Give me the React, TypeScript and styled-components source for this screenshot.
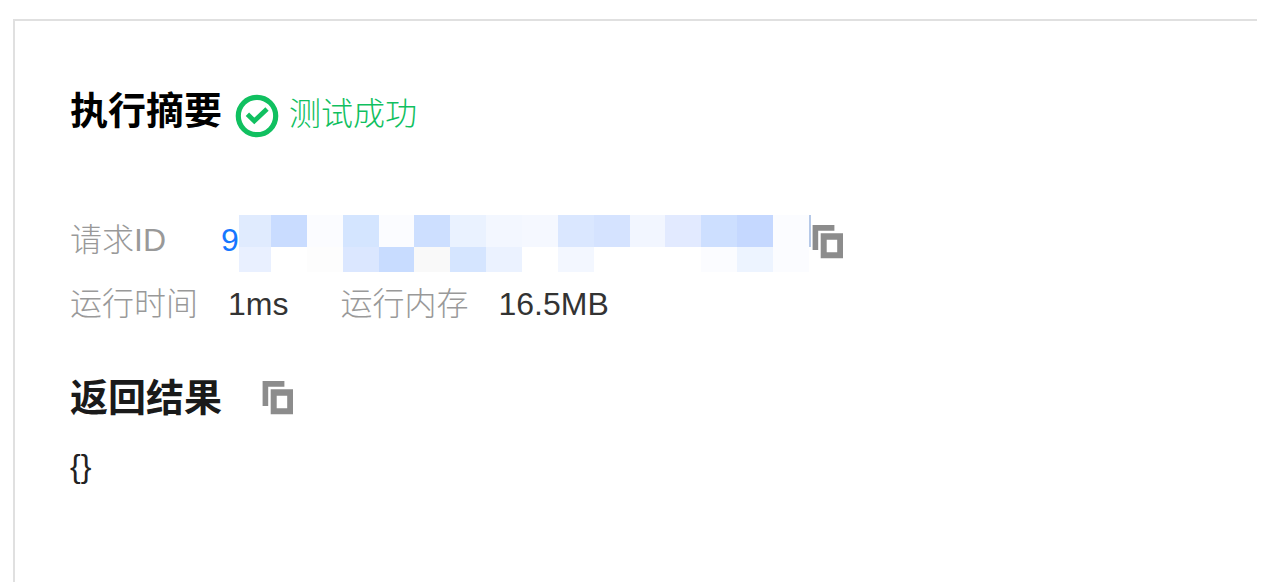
import React from "react";
import styled, { createGlobalStyle } from "styled-components";

const GlobalStyle = createGlobalStyle`
  *, *::before, *::after { box-sizing: border-box; }
  body {
    margin: 0;
    background: #fff;
    color: #222;
    font-family: "Liberation Sans", "Noto Sans CJK SC", sans-serif;
    font-size: 32px;
    line-height: 48px;
  }
`;

const Page = styled.main`
  display: flex;
  min-height: 100vh;
  padding: 19px 8px 0 13px;
`;

const Panel = styled.section`
  flex: 1;
  min-width: 0;
  padding: 63px 24px 40px 55px;
  border: solid #e0e0e0;
  border-width: 2px 0 0 2px;
`;

const Heading = styled.h2<{ $color: string }>`
  margin: 0;
  color: ${(p) => p.$color};
  font-size: 38px;
  line-height: 48px;
  font-weight: 700;
`;

const SummaryHeader = styled.header`
  display: flex;
  align-items: center;
  margin-bottom: 70px;
`;

const Status = styled.span`
  display: flex;
  align-items: center;
  gap: 10px;
  margin-left: 13px;
  padding-top: 6px;
  color: #10c060;
  font-weight: 300;

  svg {
    margin-top: 4px;
  }
`;

const Details = styled.dl`
  margin: 0;
`;

const DetailRow = styled.div`
  display: flex;
  align-items: center;
  gap: 52px;
  height: 64px;
`;

const Detail = styled.div<{ $gap: number }>`
  display: flex;
  align-items: center;
  gap: ${(p) => p.$gap}px;
`;

const Label = styled.dt`
  color: #999;
  font-weight: 300;
  white-space: nowrap;
`;

const Value = styled.dd`
  display: flex;
  align-items: center;
  margin: 0;
  color: #333;
  white-space: nowrap;

  button {
    margin: 4px 0 0 1px;
  }
`;

const RequestLink = styled.a`
  display: flex;
  align-items: center;
  color: #1677ff;
  text-decoration: none;
`;

const Mosaic = styled.span`
  display: grid;
  grid-template-columns: 32px repeat(3, 36px) 35px repeat(6, 36px) 35px repeat(4, 36px) 2px;
  grid-template-rows: 32px 25px;
  margin-top: 7px;
`;

const Cell = styled.span<{ $color: string }>`
  background: ${(p) => p.$color};
`;

const CopyButton = styled.button`
  display: flex;
  padding: 0;
  border: 0;
  background: none;
  color: #8c8c8c;
  cursor: pointer;
`;

const ResultHeader = styled.header`
  display: flex;
  align-items: center;
  gap: 40px;
  margin-top: 38px;
`;

const Output = styled.pre`
  margin: 20px 0 0;
  color: #222;
  font-family: inherit;
`;

const topCells = [
  "#e0ebfe", "#c9dcff", "#fbfcff", "#d4e5ff", "#fbfcff", "#cddfff", "#eaf2ff", "#f3f7ff", "#f5f8ff",
  "#dae7ff", "#d5e3ff", "#f2f6ff", "#e2eaff", "#cddfff", "#c5d8ff", "#fbfcff", "#b6c9e8",
];
const bottomCells = [
  "#e9f0ff", "#fff", "#fdfdfd", "#dbe7ff", "#c8dcff", "#f9f9f9", "#d5e5ff", "#ebf2ff", "#fff",
  "#f3f7ff", "#fff", "#fff", "#fff", "#fbfcff", "#edf4ff", "#fbfcff", "#fff",
];

function CopyIcon() {
  return (
    <svg width="32" height="34" viewBox="0 0 32 34" fill="currentColor" aria-hidden="true">
      <path d="M.6 0H22.4V5.7H6.2V25H.6Z" />
      <path fillRule="evenodd" d="M8.7 8.2H31V33.2H8.7ZM14.7 14.8V27.2H25.2V14.8Z" />
    </svg>
  );
}

function SuccessIcon() {
  return (
    <svg width="44" height="44" viewBox="0 0 44 44" fill="none" stroke="currentColor" aria-hidden="true">
      <circle cx="22" cy="22" r="18.7" strokeWidth="5.2" />
      <path d="M12.4 20.2 19.3 27 32 15" strokeWidth="4.8" />
    </svg>
  );
}

export default function App() {
  return (
    <>
      <GlobalStyle />
      <Page>
        <Panel>
          <SummaryHeader>
            <Heading $color="#000">执行摘要</Heading>
            <Status role="status">
              <SuccessIcon />
              测试成功
            </Status>
          </SummaryHeader>
          <Details>
            <DetailRow>
              <Detail $gap={55}>
                <Label>请求ID</Label>
                <Value>
                  <RequestLink href="#request">
                    9
                    <Mosaic aria-hidden="true">
                      {[...topCells, ...bottomCells].map((color, i) => (
                        <Cell key={i} $color={color} />
                      ))}
                    </Mosaic>
                  </RequestLink>
                  <CopyButton type="button" aria-label="复制请求ID">
                    <CopyIcon />
                  </CopyButton>
                </Value>
              </Detail>
            </DetailRow>
            <DetailRow>
              <Detail $gap={30}>
                <Label>运行时间</Label>
                <Value>1ms</Value>
              </Detail>
              <Detail $gap={30}>
                <Label>运行内存</Label>
                <Value>16.5MB</Value>
              </Detail>
            </DetailRow>
          </Details>
          <ResultHeader>
            <Heading $color="#1a1a1a">返回结果</Heading>
            <CopyButton type="button" aria-label="复制返回结果">
              <CopyIcon />
            </CopyButton>
          </ResultHeader>
          <Output>{"{}"}</Output>
        </Panel>
      </Page>
    </>
  );
}
